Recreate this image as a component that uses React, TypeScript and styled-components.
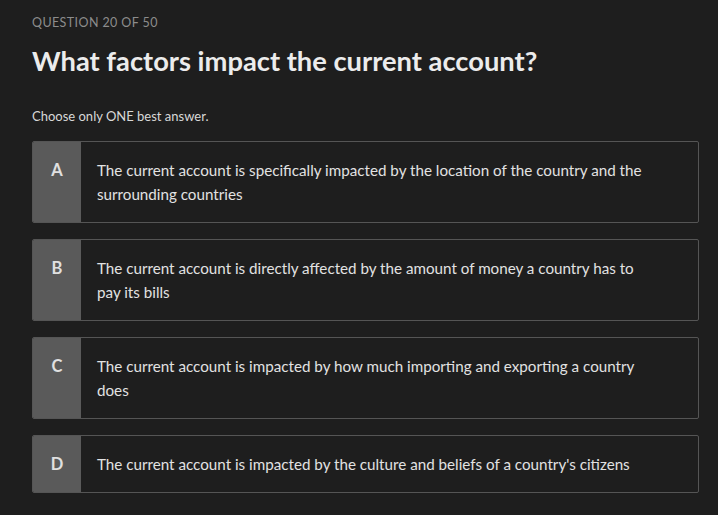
import React from 'react';
import styled, { createGlobalStyle } from 'styled-components';

const GlobalStyle = createGlobalStyle`
  html, body {
    margin: 0;
    padding: 0;
    background: #1e1e1e;
  }

  body {
    font-family: "Source Sans Pro", Lato, "Open Sans", sans-serif;
    color: #e6e6e6;
  }
`;

type Option = {
  letter: string;
  text: string;
};

const options: Option[] = [
  {
    letter: 'A',
    text: 'The current account is specifically impacted by the location of the country and the surrounding countries'
  },
  {
    letter: 'B',
    text: 'The current account is directly affected by the amount of money a country has to pay its bills'
  },
  {
    letter: 'C',
    text: 'The current account is impacted by how much importing and exporting a country does'
  },
  {
    letter: 'D',
    text: "The current account is impacted by the culture and beliefs of a country's citizens"
  }
];

const Page = styled.main`
  padding: 15px 19px 0 32px;
  min-height: 515px;
  box-sizing: border-box;
`;

const Counter = styled.div`
  font-size: 12.5px;
  line-height: 16px;
  letter-spacing: 0.4px;
  text-transform: uppercase;
  color: #8c8c8c;
`;

const Title = styled.h1`
  margin: 14px 0 0;
  font-size: 27.3px;
  line-height: 32px;
  font-weight: 700;
  color: #ececec;
`;

const Hint = styled.p`
  margin: 29px 0 0;
  font-size: 13px;
  line-height: 20px;
  color: #d8d8d8;
`;

const OptionList = styled.ul`
  list-style: none;
  margin: 15px 0 0;
  padding: 0;
  display: flex;
  flex-direction: column;
  gap: 16px;
`;

const Card = styled.li`
  display: flex;
  border: 1px solid #555555;
  border-radius: 2px;
  overflow: hidden;
  background: #1e1e1e;
`;

const Letter = styled.span`
  flex: 0 0 48px;
  background: #5a5a5a;
  text-align: center;
  padding: 16px 0;
  font-size: 16.5px;
  line-height: 24px;
  font-weight: 700;
  color: #e0e0e0;
`;

const Answer = styled.span`
  flex: 1;
  padding: 16px 48px 16px 16px;
  font-size: 15.2px;
  line-height: 24px;
  color: #e2e2e2;
`;

export default function App() {
  return (
    <>
      <GlobalStyle />
      <Page>
        <Counter>Question 20 of 50</Counter>
        <Title>What factors impact the current account?</Title>
        <Hint>Choose only ONE best answer.</Hint>
        <OptionList>
          {options.map((option) => (
            <Card key={option.letter}>
              <Letter>{option.letter}</Letter>
              <Answer>{option.text}</Answer>
            </Card>
          ))}
        </OptionList>
      </Page>
    </>
  );
}
